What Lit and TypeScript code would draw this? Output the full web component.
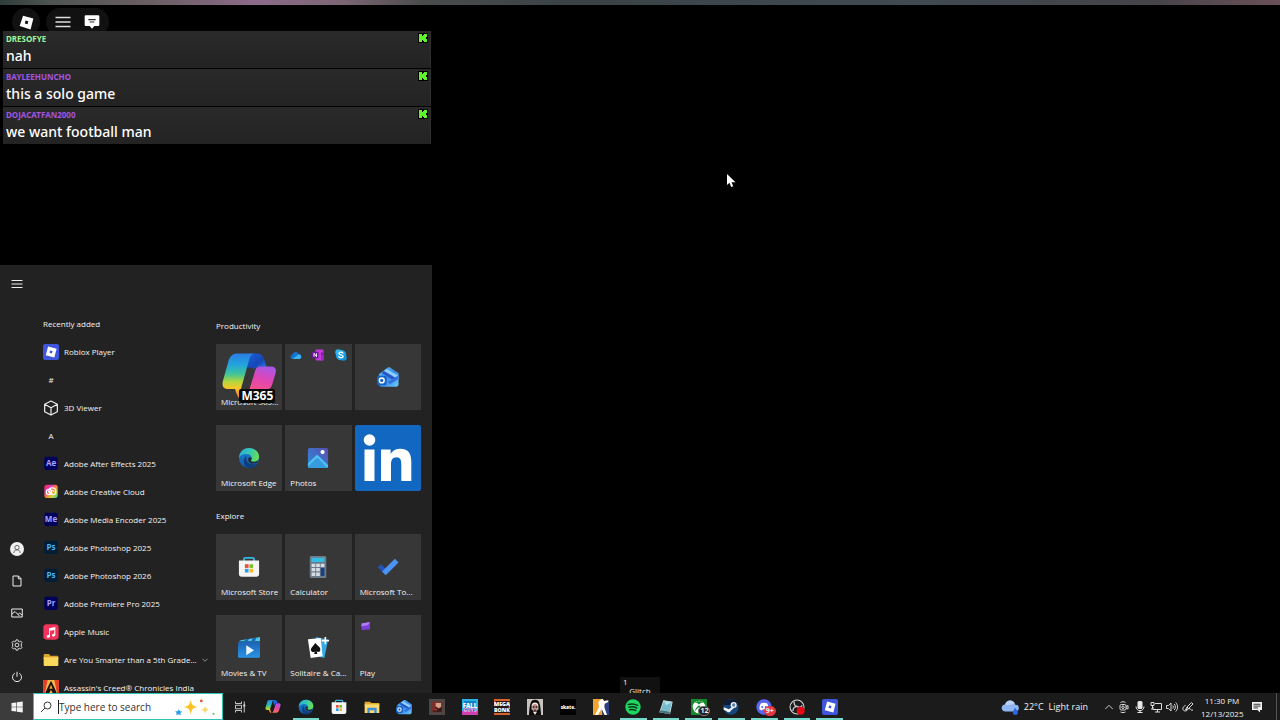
import { LitElement, html, css, svg, nothing } from "lit";
import { customElement } from "lit/decorators.js";
import { classMap } from "lit/directives/class-map.js";

const roblox = svg`<rect width="24" height="24" rx="3" fill="#3f55dc"/><path fill="#fff" fill-rule="evenodd" d="M7.6 3.6 20.4 7 17 20.2 4.2 16.8Z M10.6 9.6 9.7 13.2 13.3 14.2 14.3 10.5Z"/>`;

const adobe = (label: string, bg: string, fg: string) => svg`
  <rect x="2" y="1" width="20" height="20" rx="3" fill="${bg}"/>
  <text x="12" y="15" text-anchor="middle" font-family="Open Sans, sans-serif" font-weight="700" font-size="12" fill="${fg}">${label}</text>`;

const copilot = svg`
  <defs>
    <linearGradient id="cp1" x1="0" y1="0" x2="0" y2="1"><stop offset="0" stop-color="#2489e8"/><stop offset=".35" stop-color="#22b4c8"/><stop offset=".6" stop-color="#8fd04a"/><stop offset=".8" stop-color="#f4c52a"/><stop offset="1" stop-color="#f2682c"/></linearGradient>
    <linearGradient id="cp2" x1=".4" y1="0" x2=".2" y2="1"><stop offset="0" stop-color="#b254dc"/><stop offset=".5" stop-color="#e8479d"/><stop offset="1" stop-color="#f77a4a"/></linearGradient>
    <linearGradient id="cp3" x1="0" y1="0" x2="1" y2="1"><stop offset="0" stop-color="#1a50cf"/><stop offset="1" stop-color="#2a7cf2"/></linearGradient>
  </defs>
  <path fill="url(#cp2)" d="M18 6.5h2.6c2.4 0 3.3 1.6 2.6 3.8l-2 6.6c-.8 2.6-2 3.6-4.2 3.6H9.8c2 0 2.7-1.600 3.200-3.200l2.500-8.300c.5-1.600 1.300-2.500 2.500-2.500Z"/>
  <path fill="url(#cp3)" d="M11.500 1.500H15c1.700 0 2.500.8 3 2.500l.8 2.500H17c-1.300 0-2.200.7-2.700 2l-.5 1.500Z"/>
  <path fill="url(#cp1)" d="M6.500 1.500h7.300c-1.500 0-2.300 1-2.800 2.600L7.800 14.500c-.3 1.200-.2 2.200.6 3.200l1.300 3.500c-2-.2-2.700-1.400-3.200-3.200l-.5-1.500H3.400C1 16.500.2 15 .9 12.700L3.200 5c.6-2.300 1.500-3.500 3.300-3.500Z"/>`;

const m365 = svg`
  <defs>
    <linearGradient id="mm1" x1="0" y1="0" x2="0" y2="1"><stop offset="0" stop-color="#2a7de6"/><stop offset=".25" stop-color="#22a4dc"/><stop offset=".45" stop-color="#3fc49a"/><stop offset=".62" stop-color="#b5d63c"/><stop offset=".76" stop-color="#f8c828"/><stop offset="1" stop-color="#f0603c"/></linearGradient>
    <linearGradient id="mm2" x1=".6" y1="0" x2=".3" y2="1"><stop offset="0" stop-color="#a957e6"/><stop offset=".5" stop-color="#dc46b8"/><stop offset="1" stop-color="#f4508c"/></linearGradient>
    <linearGradient id="mm3" x1="0" y1="0" x2="1" y2="1"><stop offset="0" stop-color="#1a62dc"/><stop offset=".6" stop-color="#1746b4"/><stop offset="1" stop-color="#2a7cf2"/></linearGradient>
  </defs>
  <path fill="url(#mm3)" d="M12 1.500h3.500c2 0 2.800 1.200 3.400 3l.9 3H17c-1.500 0-2.200.3-2.700.8L11 7.500Z"/>
  <path fill="url(#mm1)" d="M7 1.500h7.500c-1.600 0-2 1.500-2.500 3L9.200 14.500c-.5 1.500-.6 2.500-1 3.500l-.4 3.800c-.9-1.200-1.500-2.500-2-4.500H2.300C.5 17.300-.1 16 .4 13.800L2.800 5.200C3.500 2.600 4.800 1.500 7 1.500Z"/>
  <path fill="url(#mm2)" d="M17 7.300h4.800c1.800 0 2.500 1.200 2 3l-1.500 5c-.5 1.600-1.300 2.200-2.800 2.200h-7.300L14.800 9c.4-1.200 1-1.700 2.200-1.700Z"/>`;

const edge = svg`
  <defs>
    <linearGradient id="eg1" x1="0" y1="0" x2="1" y2=".3"><stop offset="0" stop-color="#2aa5de"/><stop offset=".55" stop-color="#35c8b5"/><stop offset="1" stop-color="#62dc5c"/></linearGradient>
    <linearGradient id="eg2" x1="0" y1="0" x2="0" y2="1"><stop offset="0" stop-color="#1a86d8"/><stop offset="1" stop-color="#1257a5"/></linearGradient>
  </defs>
  <circle cx="12" cy="12" r="11" fill="url(#eg2)"/>
  <path fill="#0e3f7c" d="M9 12c0 6 5 8.500 12.200 5.800C19 21.500 16 23 12.500 23 6 22.500 4.500 14 9 9.500Z"/>
  <path fill="url(#eg1)" d="M1 12C1.500 5.500 6 1 12 1c6.500 0 11 4.500 11 9.500 0 3.800-2.800 5.700-5.800 5.700-2.500 0-3.600-1-3-2 .8-1 .8-1.700.8-2.700C14.500 9 12.500 7.600 9.500 7.600 5.500 7.600 2 9.300 1 12Z"/>
  <path fill="#202b33" d="M15 12.300c0 1-.3 1.300-.8 2-.5.900.8 1.900 3 1.900 1.900 0 4-.8 5-2.400-.5 1.600-1 2.700-1.500 3.300-4.500 1.900-9.700.9-9.700-3.600 0-2 2-3.300 4-1.200Z"/>`;

const store = svg`
  <path fill="none" stroke="#35b5e0" stroke-width="2" d="M6.500 7V3.500c0-1 .5-1.500 1.500-1.500h8c1 0 1.500.5 1.500 1.500V7"/>
  <path fill="#f4f4f4" d="M1 5h22v14.500c0 2-1.200 3-3 3H4c-1.800 0-3-1-3-3Z"/>
  <path fill="#e8502f" d="M7.500 9h4v4h-4z"/><path fill="#7fba2c" d="M12.500 9h4v4h-4z"/><path fill="#2a9fe8" d="M7.500 14h4v4h-4z"/><path fill="#f6b92b" d="M12.500 14h4v4h-4z"/>`;

const folder = svg`
  <path fill="#dba22c" d="M1 4.500c0-1 .5-1.500 1.500-1.500H9l2 2.500h10.500c1 0 1.500.5 1.500 1.500v4H1Z"/>
  <path fill="#fbd75b" d="M1 8h22v11.500c0 1-.5 1.500-1.500 1.500h-19C1.500 21 1 20.500 1 19.500Z"/>`;

const outlook = svg`
  <defs><linearGradient id="ol" x1="0" y1="0" x2="1" y2="1"><stop offset="0" stop-color="#5fc5f7"/><stop offset=".5" stop-color="#3a8ce8"/><stop offset="1" stop-color="#6cc8fa"/></linearGradient></defs>
  <path fill="url(#ol)" d="M2 9 11.500 2c1-.7 2-.7 3 0L23.500 8v12c0 1.800-1 2.700-2.700 2.700H5c-1.800 0-3-1-3-2.700Z"/>
  <path fill="#8fd0fb" d="m7.500 5.500 3-2.200L23.500 11v3.500Z"/>
  <path fill="#2a55c8" d="m5 7.500 2.500-2L20 13l-3.500 1.800Z"/>
  <path fill="#2f6fe0" d="M12 17.500 23.500 10v4L14 20Z"/>
  <rect y="10.500" width="10.500" height="10.500" rx="2.200" fill="#1663c4"/>
  <circle cx="5.200" cy="15.700" r="2.600" fill="none" stroke="#fff" stroke-width="1.600"/>`;

const icons: Record<string, unknown> = {
  roblox,
  copilot,
  m365,
  edge,
  store,
  folder,
  outlook,
  cube: svg`<path fill="none" stroke="#eee" stroke-width="1.800" stroke-linejoin="round" d="M12 1.500 21.500 6.500v11L12 22.500l-9.500-5v-11ZM2.500 6.500l9.500 5 9.500-5M12 11.500v11"/>`,
  ae: adobe("Ae", "#00005b", "#a6a2ff"),
  me: adobe("Me", "#00005b", "#a6a2ff"),
  ps: adobe("Ps", "#001e36", "#4ab3ff"),
  pr: adobe("Pr", "#00005b", "#a6a2ff"),
  cc: svg`
    <defs><linearGradient id="ccg" x1="0" y1="0" x2="1" y2="1"><stop offset="0" stop-color="#ec2030"/><stop offset=".3" stop-color="#e83ac0"/><stop offset=".55" stop-color="#f58a2a"/><stop offset=".75" stop-color="#c8d62f"/><stop offset="1" stop-color="#2bbcd8"/></linearGradient></defs>
    <rect x="2" y="1" width="20" height="20" rx="3.500" fill="url(#ccg)"/>
    <g fill="none" stroke="#fff" stroke-width="1.700"><circle cx="9" cy="12" r="4"/><circle cx="14" cy="11" r="5.200"/><path d="M8 11c2-1 4 4 6.500 4"/><path d="M12 12c0-3 4-3 4.500 0"/></g>`,
  music: svg`<rect x=".5" y=".5" width="23" height="23" rx="5" fill="#f4335a"/><path fill="#fff" d="M9 6.500 18.500 4.500V16c0 3.200-5 3.600-5 .8 0-2 2-2.300 3.500-2.600V9L10.500 10.300V18c0 3.200-5 3.600-5 .8 0-2 2-2.300 3.500-2.600Z"/>`,
  assassin: svg`<rect width="24" height="24" fill="#e8502c"/><path fill="#f5b84a" d="M3 0h18v24H3z"/><path fill="#e2402a" d="M0 0h7L2 24H0zM24 0h-7l5 24h2z"/><path fill="#1c1210" d="M12 1 16.500 10l4 9-4.500 3-4-7-4 7-4.500-3 4-9Z"/><path fill="#f2a040" d="M12 7 14.500 13H9.500Z"/>`,
  onedrive: svg`<path fill="#1673d2" d="M5 20c-5-.2-5.500-7-.5-8C6 5 14.500 4 17 9.500c6-.5 7.500 9 2 10.500Z"/><path fill="#38b6f5" d="m5 20 12-9c6-.8 7.500 8 2 9Z"/>`,
  onenote: svg`<rect x="7" y="1" width="16" height="22" rx="2" fill="#c23bd8"/><path fill="#7d1ba8" d="M18 7h5v5h-5z"/><path fill="#9b2bc0" d="M18 12h5v11h-5z"/><rect y="5.500" width="13" height="13" rx="1.500" fill="#6d1796"/><path fill="none" stroke="#fff" stroke-width="1.800" d="M4 15.500v-7l5 7v-7"/>`,
  skype: svg`<circle cx="12" cy="12" r="10.500" fill="#1ba5e8"/><circle cx="6.500" cy="6.500" r="6" fill="#2fb4ee"/><circle cx="17.500" cy="17.500" r="6" fill="#1492d8"/><path fill="none" stroke="#fff" stroke-width="2.600" stroke-linecap="round" d="M16 8c-1.500-2.500-8-2.300-8 .8 0 3.800 8.300 2 8.300 6 0 3.500-7 3.400-8.600.5"/>`,
  photos: svg`<defs><linearGradient id="ph" x1="0" y1="1" x2="1" y2="0"><stop offset="0" stop-color="#2a8bdc"/><stop offset="1" stop-color="#5a4fb0"/></linearGradient></defs><rect x="1" y="1" width="22" height="22" rx="2" fill="url(#ph)"/><path fill="#4fc2f2" d="M1 18 9.500 9.500c1-1 2-1 3 0L23 20v1c0 1.300-.7 2-2 2H3c-1.300 0-2-.7-2-2Z"/><path fill="#1b6fc4" d="m1 21 9-8.500c1-.8 1.500-.8 2.500 0L22 22.500c-.5.500-1 .5-1.500.5H3c-1.300 0-2-.7-2-2Z" opacity=".45"/><circle cx="17" cy="5.500" r="2.300" fill="#fff"/>`,
  linkedin: svg`<rect width="66" height="66" rx="2" fill="#1268c0"/><circle cx="14.500" cy="15" r="5.800" fill="#fff"/><path fill="#fff" d="M9.500 24.500h10v31.500h-10zM26 24.500h9.600v4.300c2-3.300 5.300-5.100 9.700-5.100 8.300 0 11 5 11 13.500V56h-10V39.500c0-4.300-.8-7.300-4.800-7.300-4 0-5.500 2.800-5.500 7V56H26z"/>`,
  calculator: svg`<rect x="3" y="0" width="18" height="24" rx="1.500" fill="#6d7c8c"/><path fill="#32bfe4" d="M5 2h14v4.500H5z"/><path fill="#d5dde4" d="M5 8.500h4V12H5zM10 8.500h4V12h-4zM15 8.500h4V12h-4zM5 13.200h4v3.500H5zM10 13.200h4v3.500h-4zM5 18h4v3.700H5zM10 18h4v3.700h-4z"/><path fill="#173f80" d="M15 13.200h4v8.500h-4z"/>`,
  todo: svg`<path fill="#2453ba" d="M1 12.500 4.500 9l8 8L9 20.500Z"/><path fill="#4b93f5" d="M5.500 17 19.500 3 23.500 7 9.500 21Z"/>`,
  movies: svg`<defs><linearGradient id="mv" x1="0" y1="0" x2="0" y2="1"><stop offset="0" stop-color="#1c62b4"/><stop offset="1" stop-color="#2a93e4"/></linearGradient></defs><path fill="url(#mv)" d="M0 6.500 2 5h22v16.500c0 .7-.4 1-1 1H1c-.7 0-1-.3-1-1Z"/><path fill="#46c8ee" d="M3 3.500 24 0v4.500H1Z"/><path fill="#1b6ab8" d="m8 2.700 4-.7-1.500 2.500h-4zM16 1.300l4-.6-1.500 3.800h-4z"/><path fill="#e8f6ff" d="M9 9v11l8.500-5.500Z"/>`,
  solitaire: svg`<path fill="#35a9e4" d="m10 0 13 3-4 20-12-3Z"/><path fill="#fff" d="M1 2.500 15 1l2 20L4 23Z"/><path fill="#111" d="M9 6.500c4 4.200 6 5 5.500 8-.3 2-3 2.300-4 .8l.8 3.200h-3.500l.8-3c-1 1.500-4 1.200-4.300-1C4 11.500 6.500 10.500 9 6.500Z"/><path stroke="#fff" stroke-width="1.800" d="M20 0v8M16 4h8"/>`,
  clip: svg`<path fill="#7a3fd8" d="m3 7 17-3v15L3 20Z"/><path fill="#b57bf5" d="m3 7 17-3-4 6L3 13Z"/>`,
  explorer: svg`<path fill="#e0a92e" d="M1 4h8l2 2h12v5H1z"/><path fill="#fbd96a" d="M1 8h22v13H1z"/><path fill="#3d8ed8" d="M5 21v-8h14v8h-3.500v-4h-7v4z"/>`,
  game1: svg`<rect width="24" height="24" fill="#4a4744"/><rect x="4" y="4" width="16" height="16" fill="#7a2f2a"/><path fill="#d6a08a" d="M10 6h8v6l-4 2-4-3z"/><path fill="#301a1a" d="m5 19 6-7 4 3 4-3v7z"/><path fill="#c23c34" d="m6 17 5-3 2 3z"/>`,
  fall: svg`<rect width="24" height="24" fill="#2bb3e6"/><path fill="#d33fae" d="M0 18h24v6H0z"/><path fill="#187cc0" d="M3 3h18v16H3z"/><text x="12" y="13" text-anchor="middle" font-family="Open Sans, sans-serif" font-weight="800" font-size="9" fill="#fff">FALL</text><text x="12" y="20" text-anchor="middle" font-family="Open Sans, sans-serif" font-weight="800" font-size="7" fill="#ff9be4">GUYS</text>`,
  mega: svg`<rect width="24" height="24" fill="#2a1712"/><path fill="#d8622c" d="M0 0h24v3H0zM0 3h2v8H0zM22 5h2v9h-2zM0 21h24v3H0z"/><g font-family="Open Sans, sans-serif" font-weight="800" font-size="8" fill="#fff" text-anchor="middle"><text x="12" y="11">MEGA</text><text x="12" y="20">BONK</text></g>`,
  nun: svg`<rect width="24" height="24" fill="#c8c2be"/><path fill="#0b0b0b" d="M3 24C4 5 6 1 12 1s8 4 9 23Z"/><path fill="#f1ece8" d="M7 9c1-5 9-5 10 0v7H7z"/><ellipse cx="12" cy="13" rx="4.200" ry="5.500" fill="#b98f86"/><path fill="#2a1414" d="M8.500 11h2.500v2H8.500zM13 11h2.500v2H13zM10.500 16h3v1.500h-3z"/><path fill="#efe9e5" d="m9 19 3 5 3-5z"/>`,
  skate: svg`<rect width="24" height="24" fill="#020202"/><text x="12" y="15" text-anchor="middle" font-family="Open Sans, sans-serif" font-weight="800" font-size="7" fill="#fff">skate.</text>`,
  cs: svg`<path fill="#f0a42e" d="M0 0h14v24H0z"/><path fill="#2c3f80" d="M14 5h10v19H14z"/><path fill="#fff" d="m11 1 4-1 1.500 3L23 2v2.500L17.500 7 17 12l4 12h-3.500L13 15 7 24H3L9 12l-1-7Z"/>`,
  spotify: svg`<circle cx="12" cy="12" r="11.500" fill="#1ed760"/><path fill="none" stroke="#10381d" stroke-linecap="round" stroke-width="2.200" d="M5 8.200c4.500-1.400 9.500-1 14 1.300M6 12.300c4-1.200 8-.8 11.500 1.200M7 16.200c3-.9 6-.6 9 1"/>`,
  note: svg`<path fill="#dfe9ec" d="m8 2 14 2-4 19L2 20Z"/><path fill="#76bccc" d="m9 2.500 12 2L17.500 19 4 17Z"/><path fill="#b8e2ea" d="m9 2.500 12 2-9 5Z"/><path fill="#43717c" d="M4 17 17.500 19 18 23 2 20Z"/>`,
  xbox: svg`<rect width="24" height="24" fill="#138a2b"/><circle cx="12" cy="12" r="9.500" fill="#fff"/><path fill="#138a2b" d="M5 5.500c3-.5 5 1 7 2.800 2-1.800 4-3.300 7-2.800-2-3-12-3-14 0ZM5.500 19C6 15 9 11.500 12 9.500c3 2 6 5.500 6.500 9.500-1-1.500-4-5-6.500-6.500C9.500 14 6.500 17.500 5.500 19Z"/>`,
  steam: svg`<circle cx="12" cy="12" r="11.500" fill="#17467c"/><path fill="#0c1c38" d="M1 9a11.500 11.500 0 0 1 22 0Z"/><circle cx="16" cy="9" r="4.600" fill="#f0f4f8"/><circle cx="16" cy="9" r="2.500" fill="#5a7ea6"/><path fill="#f0f4f8" d="m1 12.500 8 3 5-4 2 2.500-4.500 3.500a3.300 3.300 0 0 1-6 1L1 16Z"/>`,
  discord: svg`<circle cx="12" cy="12" r="11.500" fill="#5865f2"/><path fill="#fff" d="M7.500 6.500c3-1 6-1 9 0 1.800 2.800 2.500 5.500 2.300 9-1.300 1-2.300 1.500-3.500 1.800l-1-1.600h-4.600l-1 1.600c-1.200-.3-2.200-.8-3.500-1.800-.2-3.500.5-6.200 2.300-9Z"/><circle cx="9.300" cy="12" r="1.600" fill="#5865f2"/><circle cx="14.700" cy="12" r="1.600" fill="#5865f2"/>`,
  obs: svg`<circle cx="12" cy="12" r="10.500" fill="#1c1b1e" stroke="#d8d8d8" stroke-width="1.600"/><path fill="none" stroke="#c9c9c9" stroke-width="2" d="M8 4c-1 3.500.5 6.500 4 7M20 9.500c-2 3-5.500 3.500-8 1.500M6 18c-.5-3.500 2-6.500 6-7"/><circle cx="17.500" cy="17.500" r="6" fill="#e50914"/>`,
  win: svg`<path fill="#f2f2f2" d="M1 4.200 10.800 2.900v8.600H1zM12 2.700 23.500 1v10.500H12zM1 12.600h9.800v8.600L1 19.900zM12 12.600h11.500V23L12 21.400z"/>`,
  menu: svg`<path stroke="#ddd" stroke-width="1.800" d="M3 6.500h18M3 12h18M3 17.500h18"/>`,
  burger: svg`<path stroke="#eee" stroke-width="2" d="M1 5h22M1 12h22M1 19h22"/>`,
  user: svg`<circle cx="12" cy="12" r="12" fill="#f0f0f0"/><g fill="none" stroke="#555" stroke-width="1.500"><circle cx="12" cy="9.500" r="3.700"/><path d="M6.500 19c.3-7.500 10.700-7.500 11 0"/></g>`,
  doc: svg`<path fill="none" stroke="#eee" stroke-width="2" d="M4 2h11l5 5v15H4ZM14.500 2v5.500H20"/>`,
  picture: svg`<path fill="none" stroke="#eee" stroke-width="2" d="M1.500 4h21v16h-21ZM2 14l6-5 9 9M14 15l3-3 5 4"/>`,
  gear: svg`<g fill="none" stroke="#eee" stroke-width="1.800"><path d="m10 1.800-.6 2.800-2.200.9-2.400-1.500L2.100 7l1.500 2.400-.6 2.600.6 2.600L2.100 17l2.700 3 2.400-1.500 2.200.9.600 2.800h4l.6-2.800 2.200-.9 2.400 1.500 2.700-3-1.500-2.400.6-2.600-.6-2.600L21.900 7l-2.700-3-2.400 1.500-2.200-.9-.6-2.800Z"/><circle cx="12" cy="12" r="3.800"/></g>`,
  power: svg`<path fill="none" stroke="#eee" stroke-width="2" d="M12 1.500v10M7.500 4.500a9 9 0 1 0 9 0"/>`,
  search: svg`<g fill="none" stroke="#222" stroke-width="1.800"><circle cx="15" cy="9" r="7"/><path d="m10 14-8 8"/></g>`,
  taskview: svg`<path fill="none" stroke="#ddd" stroke-width="1.800" d="M3 1v4h12V1M3 23v-4h12v4M3 8.500h12v7H3ZM20.500 1v22"/><path fill="#ddd" d="M18.500 7h4v4h-4z"/>`,
  chevronUp: svg`<path fill="none" stroke="#ddd" stroke-width="2.200" d="m3 17 9-9 9 9"/>`,
  chevronDown: svg`<path fill="none" stroke="#ccc" stroke-width="2.600" d="m2 7 10 10L22 7"/>`,
  meet: svg`<g fill="none" stroke="#ddd" stroke-width="2"><rect x="4" y="7" width="12" height="11" rx="2.500"/><circle cx="10" cy="12.500" r="2.500"/><path d="m16 11 4-2v7l-4-2M5 3c3-2 7-2 10 0M5 22c3 1.500 7 1.500 10 0"/></g>`,
  mic: svg`<rect x="7" y="0" width="10" height="16" rx="3" fill="#e8e8e8"/><path fill="none" stroke="#e8e8e8" stroke-width="2" d="M4 11c0 11 16 11 16 0M12 19v4M7 23h10"/>`,
  network: svg`<path fill="none" stroke="#ddd" stroke-width="2" d="M10 5h13v12H6v-5M10 22h10M15 17v5M2 3h6v6H2ZM5 9v6M2 16h4"/>`,
  sound: svg`<path fill="none" stroke="#ddd" stroke-width="1.900" d="M1 9h4l5-5v16l-5-5H1ZM13.500 9c1.500 2 1.500 4 0 6M16.500 6c3 4 3 8 0 12M19.500 3c5 6 5 12 0 18"/>`,
  pen: svg`<path fill="none" stroke="#ddd" stroke-width="2" d="m7 18 3-6L19 3l3 3-9 9Zm3-6 3 3M7 9c-7 2-7 11 0 11 5 0 2-5 7-5s2 5 8 3"/>`,
  action: svg`<path fill="#f2f2f2" d="M2 2h20v16h-4v5l-5-5H2Z"/><path stroke="#222" stroke-width="1.800" d="M5 6.500h14M5 10.200h14M5 13.900h9"/>`,
  cloud: svg`<path fill="#8fb5f2" d="M6 18C-1 17.500-.5 9 5.500 8.800 7 2 17 1.500 18.500 8.500 26 9 25 18 19 18Z"/><path fill="#b6d0fa" d="M5.500 9C7 2 17 1.500 18.500 8.500c-5-1-8 2-13 .5Z"/><path fill="#2767e8" d="M18.500 13c3 3.500 4.500 5 3.800 7.500-1 2.500-5 2.700-6.200.5C14.800 18.500 17 16.500 18.500 13Z"/>`,
  tilt: svg`<path fill="#fff" fill-rule="evenodd" d="M6.500 1 23 5.500 18.500 23 1 17.500Z M10.500 8.900 9.300 13.500 13.700 14.700 14.900 10.100Z"/>`,
  chat: svg`<path fill="#fff" fill-rule="evenodd" d="M3 2h18c1.300 0 2 .7 2 2v12c0 1.300-.7 2-2 2h-5.500L12 22l-3.500-4H3c-1.300 0-2-.7-2-2V4c0-1.300.7-2 2-2Z"/><path stroke="#333" stroke-width="1.800" d="M6.500 8.500h11M8.500 12h7"/>`,
  sparkle: svg`<path fill="#f7c325" d="M22 2c1 7 3 9 10 10-7 1-9 3-10 10-1-7-3-9-10-10 7-1 9-3 10-10Z"/><path fill="#fbd765" d="M41 10c.6 3.600 2 5 5.500 5.500-3.500.6-5 2-5.500 5.500-.6-3.500-2-5-5.500-5.500 3.500-.5 5-2 5.500-5.500Z"/><path fill="#2b9fe0" d="m6 15 2 2.500 3 .5-2.500 2 .5 3-3-1.500L3 23l.500-3L1.500 17.500h3.500Z"/><circle cx="36" cy="4" r="1.800" fill="#e4572e"/><circle cx="52" cy="21" r="1.500" fill="#7fc46a"/>`,
};

const icon = (name: string, cls = "i16", box = "0 0 24 24") =>
  html`<svg class=${cls} viewBox=${box} aria-hidden="true">${icons[name]}</svg>`;

interface Message { user: string; text: string; green?: boolean }
const messages: Message[] = [
  { user: "DRESOFYE", text: "nah", green: true },
  { user: "BAYLEEHUNCHO", text: "this a solo game" },
  { user: "DOJACATFAN2000", text: "we want football man" },
];

@customElement("chat-overlay")
class ChatOverlay extends LitElement {
  static styles = css`
    :host { display: block; position: relative; }
    .list { list-style: none; margin: 0; padding: 0; display: grid; gap: 1px; }
    .row { display: grid; grid-template-columns: 1fr auto; padding: 1px 2px 2px 3px; background: linear-gradient(#2a2a2a, #232323); border: 0 solid #2e2e2e; border-right-width: 1px; }
    .user { font: 700 8px/14px "Noto Sans", sans-serif; color: #a455e0; }
    .user.green { color: #9df79a; }
    .text { grid-column: 1 / -1; margin: 0; font: 500 14px/20px "Noto Sans", sans-serif; color: #fff; }
    .badge { width: 10px; height: 10px; margin: 1px 0; background: #000; }
  `;
  render() {
    return html`<ul class="list">
      ${messages.map((m) => html`<li class="row">
        <span class=${classMap({ user: true, green: !!m.green })}>${m.user}</span>
        <svg class="badge" viewBox="0 0 10 10" aria-label="Kick"><path fill="#5cf52c" d="M1 1h3v2h1V2h1V1h3v3H8v2h1v3H6V8H5V7H4v2H1z"/></svg>
        <p class="text">${m.text}</p>
      </li>`)}
    </ul>`;
  }
}

interface Entry { icon?: string; label: string; more?: boolean }
const entries: Entry[] = [
  { icon: "roblox", label: "Roblox Player" },
  { label: "#" },
  { icon: "cube", label: "3D Viewer" },
  { label: "A" },
  { icon: "ae", label: "Adobe After Effects 2025" },
  { icon: "cc", label: "Adobe Creative Cloud" },
  { icon: "me", label: "Adobe Media Encoder 2025" },
  { icon: "ps", label: "Adobe Photoshop 2025" },
  { icon: "ps", label: "Adobe Photoshop 2026" },
  { icon: "pr", label: "Adobe Premiere Pro 2025" },
  { icon: "music", label: "Apple Music" },
  { icon: "folder", label: "Are You Smarter than a 5th Grade...", more: true },
  { icon: "assassin", label: "Assassin's Creed® Chronicles India" },
];

interface Tile { kind: string; icons: string[]; label: string }
const groups: { title: string; tiles: Tile[] }[] = [
  {
    title: "Productivity",
    tiles: [
      { kind: "large", icons: ["m365"], label: "Microsoft 365..." },
      { kind: "multi", icons: ["onedrive", "onenote", "skype"], label: "" },
      { kind: "app", icons: ["outlook"], label: "" },
      { kind: "app", icons: ["edge"], label: "Microsoft Edge" },
      { kind: "app", icons: ["photos"], label: "Photos" },
      { kind: "full", icons: ["linkedin"], label: "" },
    ],
  },
  {
    title: "Explore",
    tiles: [
      { kind: "app", icons: ["store"], label: "Microsoft Store" },
      { kind: "app", icons: ["calculator"], label: "Calculator" },
      { kind: "app", icons: ["todo"], label: "Microsoft To..." },
      { kind: "app", icons: ["movies"], label: "Movies & TV" },
      { kind: "app", icons: ["solitaire"], label: "Solitaire & Ca..." },
      { kind: "multi", icons: ["clip"], label: "Play" },
    ],
  },
];

@customElement("start-menu")
class StartMenu extends LitElement {
  static styles = css`
    :host { display: grid; grid-template-columns: 33px 183px 1fr; background: #222; color: #f4f4f4; font: 8px/16px "Open Sans", "Noto Sans", sans-serif; }
    button { font: inherit; color: inherit; background: none; border: 0; padding: 0; margin: 0; text-align: left; }
    h2 { font: inherit; margin: 0; }
    .rail { display: flex; flex-direction: column; padding-top: 3px; }
    .rail button { height: 32px; display: grid; place-items: center; }
    .rail .push { margin-bottom: auto; }
    .apps { contain: size; overflow: hidden; padding: 45px 0 0 10px; }
    .heading, .entry, .letter { height: 28px; display: flex; align-items: center; white-space: nowrap; }
    .entry { width: 100%; gap: 5px; }
    .letter { width: 16px; justify-content: center; }
    .i16, .i14 { flex: none; display: block; }
    .i16 { width: 16px; height: 16px; }
    .i14 { width: 14px; height: 14px; }
    .i12 { width: 12px; height: 12px; }
    .i6 { width: 6px; height: 6px; }
    .tiles { padding: 53px 11px 12px 0; display: grid; gap: 17px; align-content: start; }
    .group { display: grid; gap: 10px; }
    .grid { display: grid; grid-template-columns: repeat(3, 1fr); gap: 15px 3px; }
    .tile { position: relative; height: 66px; background: #373737; display: grid; place-items: center; }
    .label { position: absolute; left: 5px; bottom: 0; white-space: nowrap; }
    .i22 { width: 22px; height: 22px; display: block; }
    .multi { display: flex; align-items: start; justify-content: space-between; padding: 5px; }
    .full { background: none; }
    .i66 { width: 66px; height: 66px; display: block; }
    .i54 { width: 54px; height: 54px; display: block; }
    .tag { position: absolute; right: 7px; bottom: 7px; background: #0a0a0a; border-radius: 2px; padding: 0 2px; font: 700 12px/14px "Open Sans", sans-serif; color: #fff; }
  `;
  private tile(t: Tile) {
    const size = t.kind === "full" ? "i66" : t.kind === "large" ? "i54" : t.kind === "multi" ? "i12" : "i22";
    return html`<button class=${classMap({ tile: true, [t.kind]: true })} aria-label=${t.label || t.icons[0]}>
      ${t.icons.map((n) => icon(n, size, t.kind === "full" ? "0 0 66 66" : "0 0 24 24"))}
      ${t.label ? html`<span class="label">${t.label}</span>` : nothing}
      ${t.kind === "large" ? html`<span class="tag">M365</span>` : nothing}
    </button>`;
  }
  render() {
    return html`
      <nav class="rail">
        <button class="push" aria-label="Menu">${icon("burger", "i12")}</button>
        <button aria-label="Account">${icon("user", "i14")}</button>
        <button aria-label="Documents">${icon("doc", "i12")}</button>
        <button aria-label="Pictures">${icon("picture", "i12")}</button>
        <button aria-label="Settings">${icon("gear", "i12")}</button>
        <button aria-label="Power">${icon("power", "i12")}</button>
      </nav>
      <section class="apps">
        <h2 class="heading">Recently added</h2>
        ${entries.map((e) => e.icon
          ? html`<button class="entry">${icon(e.icon)}<span>${e.label}</span>${e.more ? icon("chevronDown", "i6") : nothing}</button>`
          : html`<div class="letter">${e.label}</div>`)}
      </section>
      <section class="tiles">
        ${groups.map((g) => html`<div class="group"><h2>${g.title}</h2><div class="grid">${g.tiles.map((t) => this.tile(t))}</div></div>`)}
      </section>`;
  }
}

interface Task { icon: string; open?: boolean; badge?: string; red?: boolean; preview?: boolean }
const tasks: Task[] = [
  { icon: "copilot" },
  { icon: "edge", open: true },
  { icon: "store" },
  { icon: "explorer" },
  { icon: "outlook" },
  { icon: "game1" },
  { icon: "fall" },
  { icon: "mega" },
  { icon: "nun" },
  { icon: "skate" },
  { icon: "cs" },
  { icon: "spotify", open: true, preview: true },
  { icon: "note", open: true },
  { icon: "xbox", open: true, badge: "12" },
  { icon: "steam", open: true },
  { icon: "discord", open: true, badge: "9+", red: true },
  { icon: "obs", open: true },
  { icon: "roblox", open: true },
];

@customElement("task-bar")
class TaskBar extends LitElement {
  static styles = css`
    :host { display: flex; height: 27px; background: #1b1b1b; color: #f2f2f2; font: 9px/13px "Open Sans", "Noto Sans", sans-serif; }
    button { font: inherit; color: inherit; background: none; border: 0; padding: 0; margin: 0; display: grid; place-items: center; }
    svg { display: block; flex: none; }
    .i16 { width: 16px; height: 16px; }
    .i12 { width: 12px; height: 12px; }
    .i10 { width: 10px; height: 10px; }
    .i18 { width: 18px; height: 18px; }
    .start { flex: 0 0 33px; background: #3c3c3c; }
    .search { flex: 0 0 190px; min-width: 0; box-sizing: border-box; display: flex; align-items: center; background: #fff; border: 1px solid #2fc4b8; padding: 0 4px 0 6px; }
    .field { flex: 1; width: 0; min-width: 0; margin-left: 6px; height: 14px; padding: 0; border: 0; border-left: 1px solid #222; outline: 0; background: none; font: 10px/14px "Open Sans", sans-serif; color: #222; }
    .field::placeholder { color: #333; opacity: 1; }
    .spark { width: 44px; height: 20px; }
    .view { flex: 0 0 34px; }
    .tasks { flex: 0 1 589px; display: grid; grid-template-columns: repeat(18, 1fr); }
    .task { position: relative; }
    .open::after { content: ""; position: absolute; left: 3px; right: 3px; bottom: 0; height: 2px; background: #76d9cc; }
    .badge { position: absolute; left: 16px; top: 13px; min-width: 8px; padding: 0 1px; border-radius: 5px; border: 1px solid #777; background: #222; font: 700 7px/8px "Open Sans", sans-serif; }
    .red { background: #e0383e; border-color: #e0383e; }
    .preview { position: absolute; left: 3px; bottom: 100%; width: 40px; height: 16px; box-sizing: border-box; padding: 0 3px; overflow: hidden; background: #111; font: 8px/9px "Open Sans", sans-serif; text-align: left; }
    .title { display: block; text-align: center; }
    .tray { margin-left: auto; display: flex; align-items: center; }
    .weather { display: flex; align-items: center; gap: 5px; margin-right: 16px; }
    .status { display: flex; align-items: center; gap: 4px; }
    .clock { margin: 0 8px 0 7px; text-align: center; display: block; width: 42px; white-space: nowrap; font-size: 8px; }
    .edge { align-self: stretch; width: 3px; margin-left: 13px; border-left: 1px solid #555; }
  `;
  render() {
    return html`
      <button class="start" aria-label="Start">${icon("win", "i12")}</button>
      <label class="search">${icon("search", "i12")}<input class="field" type="text" aria-label="Search" placeholder="Type here to search" />${icon("sparkle", "spark", "0 0 58 24")}</label>
      <button class="view" aria-label="Task view">${icon("taskview", "i12")}</button>
      <nav class="tasks">
        ${tasks.map((t) => html`<button class=${classMap({ task: true, open: !!t.open })} aria-label=${t.icon}>
          ${icon(t.icon)}
          ${t.badge ? html`<span class=${classMap({ badge: true, red: !!t.red })}>${t.badge}</span>` : nothing}
          ${t.preview ? html`<span class="preview">1<span class="title">Glitch</span></span>` : nothing}
        </button>`)}
      </nav>
      <div class="tray">
        <button class="weather">${icon("cloud", "i18")}<span>22°C</span><span>Light rain</span></button>
        <div class="status">
          ${["chevronUp", "meet", "mic", "network", "sound", "pen"].map((n) => html`<button aria-label=${n}>${icon(n, n === "chevronUp" ? "i10" : "i12")}</button>`)}
        </div>
        <button class="clock">11:30 PM<br />12/13/2025</button>
        <button aria-label="Notifications">${icon("action", "i12")}</button>
        <span class="edge"></span>
      </div>`;
  }
}

@customElement("app-root")
class AppRoot extends LitElement {
  static styles = css`
    :host { display: flex; flex-direction: column; min-height: 100vh; background: #000; position: relative; overflow: hidden; }
    .strip { height: 5px; background: linear-gradient(90deg, #2f3d3a, #4e5452 4%, #6b5f64 12%, #8c6b8a 20%, #7b6572 27%, #4a4c4c 33%, #3a4245 45%, #3f4a50 70%, #454449 90%, #6a5058); }
    .bar { display: flex; align-items: start; gap: 6px; height: 23px; padding: 3px 0 0 12px; }
    .bar button { border: 0; padding: 0; background: none; display: grid; place-items: center; }
    .bar .home { width: 28px; height: 28px; border-radius: 50%; background: #111; }
    .pill { display: flex; gap: 11px; align-items: center; height: 28px; padding: 0 9px 0 7px; border-radius: 14px; background: #111; }
    .i15 { width: 15px; height: 15px; display: block; }
    .i16 { width: 16px; height: 16px; display: block; }
    .i20 { width: 20px; height: 20px; display: block; }
    .chat { width: 428px; margin-left: 3px; }
    .space { flex: 1; }
    .menu { width: 432px; }
    .cursor { position: absolute; left: 727px; top: 174px; width: 9px; height: 14px; }
  `;
  render() {
    return html`
      <div class="strip"></div>
      <header class="bar">
        <button class="home" aria-label="Roblox">${icon("tilt", "i15")}</button>
        <div class="pill">
          <button aria-label="Menu">${icon("menu", "i20")}</button>
          <button aria-label="Chat">${icon("chat", "i16")}</button>
        </div>
      </header>
      <chat-overlay class="chat"></chat-overlay>
      <div class="space"></div>
      <start-menu class="menu"></start-menu>
      <task-bar></task-bar>
      <svg class="cursor" viewBox="0 0 9 14" aria-hidden="true"><path fill="#fff" d="M0 0v11l2.500-2.200L4.200 13l2-.8-1.700-4H8.500Z"/></svg>`;
  }
}
